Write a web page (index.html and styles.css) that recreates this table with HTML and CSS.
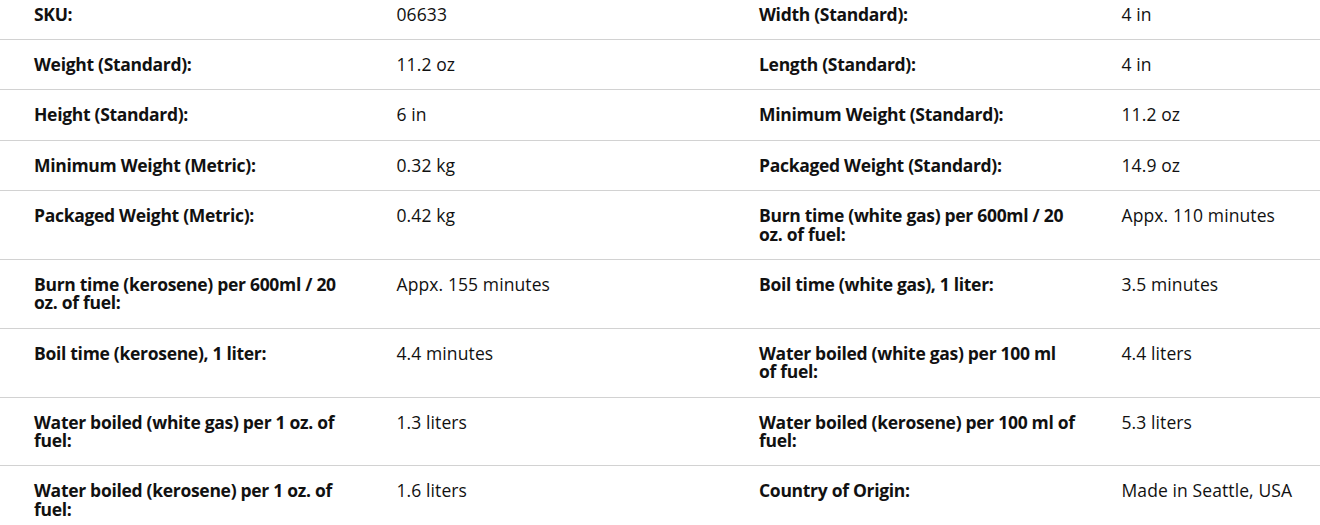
FILE: index.html
```html
<!DOCTYPE html>
<html lang="en">
<head>
<meta charset="utf-8">
<title>Specifications</title>
<link rel="stylesheet" href="styles.css">
</head>
<body>
<div class="viewport">
  <div class="specs">
    <div class="cell label">SKU:</div><div class="cell value">06633</div>
    <div class="cell label">Width (Standard):</div><div class="cell value">4 in</div>

    <div class="cell label">Weight (Standard):</div><div class="cell value">11.2 oz</div>
    <div class="cell label">Length (Standard):</div><div class="cell value">4 in</div>

    <div class="cell label">Height (Standard):</div><div class="cell value">6 in</div>
    <div class="cell label">Minimum Weight (Standard):</div><div class="cell value">11.2 oz</div>

    <div class="cell label">Minimum Weight (Metric):</div><div class="cell value">0.32 kg</div>
    <div class="cell label">Packaged Weight (Standard):</div><div class="cell value">14.9 oz</div>

    <div class="cell label">Packaged Weight (Metric):</div><div class="cell value">0.42 kg</div>
    <div class="cell label">Burn time (white gas) per 600ml / 20 oz. of fuel:</div><div class="cell value">Appx. 110 minutes</div>

    <div class="cell label">Burn time (kerosene) per 600ml / 20 oz. of fuel:</div><div class="cell value">Appx. 155 minutes</div>
    <div class="cell label">Boil time (white gas), 1 liter:</div><div class="cell value">3.5 minutes</div>

    <div class="cell label">Boil time (kerosene), 1 liter:</div><div class="cell value">4.4 minutes</div>
    <div class="cell label">Water boiled (white gas) per 100 ml of fuel:</div><div class="cell value">4.4 liters</div>

    <div class="cell label">Water boiled (white gas) per 1 oz. of fuel:</div><div class="cell value">1.3 liters</div>
    <div class="cell label">Water boiled (kerosene) per 100 ml of fuel:</div><div class="cell value">5.3 liters</div>

    <div class="cell label">Water boiled (kerosene) per 1 oz. of fuel:</div><div class="cell value">1.6 liters</div>
    <div class="cell label">Country of Origin:</div><div class="cell value">Made in Seattle, USA</div>
  </div>
</div>
</body>
</html>
```

FILE: styles.css
```css
html, body {
  margin: 0;
  padding: 0;
  background: #ffffff;
}

body {
  font-family: "Open Sans", "Liberation Sans", sans-serif;
  color: #111111;
  overflow: hidden;
}

.viewport {
  width: 1320px;
  height: 525px;
  overflow: hidden;
}

.specs {
  display: grid;
  grid-template-columns: repeat(4, 362.5px);
  width: 1450px;
  margin-top: -10px;
}

.cell {
  font-size: 17.5px;
  line-height: 18.7px;
  padding: 15px 12px 15.5px 34px;
  border-bottom: 1px solid #d2d2d2;
}

.label {
  font-weight: 700;
  letter-spacing: -0.3px;
}

.value {
  font-weight: 400;
  letter-spacing: 0.1px;
}
```
